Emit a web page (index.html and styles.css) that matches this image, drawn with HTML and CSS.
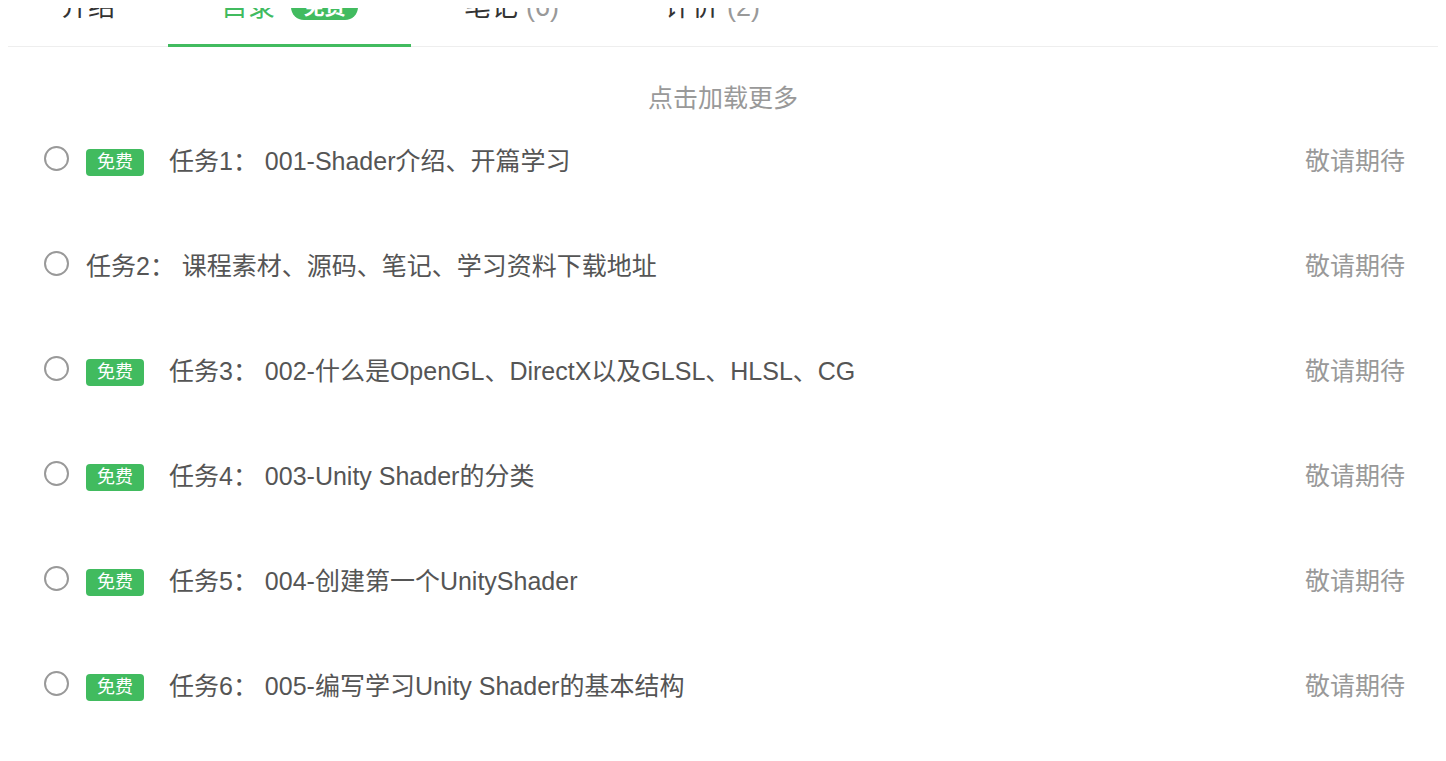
FILE: index.html
```html
<!DOCTYPE html>
<html lang="zh-CN">
<head>
<meta charset="utf-8">
<title>目录</title>
<link rel="stylesheet" href="styles.css">
</head>
<body>
<div class="page">
  <div class="tabs">
    <div class="tab">介绍</div>
    <div class="tab active">目录<span class="tab-badge">免费</span></div>
    <div class="tab">笔记<span class="count">(6)</span></div>
    <div class="tab">评价<span class="count">(2)</span></div>
  </div>
  <div class="load-more">点击加载更多</div>
  <ul class="list">
    <li class="row"><span class="radio"></span><span class="free">免费</span><span class="title">任务1：&nbsp;001-Shader介绍、开篇学习</span><span class="status">敬请期待</span></li>
    <li class="row"><span class="radio"></span><span class="title">任务2：&nbsp;课程素材、源码、笔记、学习资料下载地址</span><span class="status">敬请期待</span></li>
    <li class="row"><span class="radio"></span><span class="free">免费</span><span class="title">任务3：&nbsp;002-什么是OpenGL、DirectX以及GLSL、HLSL、CG</span><span class="status">敬请期待</span></li>
    <li class="row"><span class="radio"></span><span class="free">免费</span><span class="title">任务4：&nbsp;003-Unity Shader的分类</span><span class="status">敬请期待</span></li>
    <li class="row"><span class="radio"></span><span class="free">免费</span><span class="title">任务5：&nbsp;004-创建第一个UnityShader</span><span class="status">敬请期待</span></li>
    <li class="row"><span class="radio"></span><span class="free">免费</span><span class="title">任务6：&nbsp;005-编写学习Unity Shader的基本结构</span><span class="status">敬请期待</span></li>
  </ul>
</div>
</body>
</html>
```

FILE: styles.css
```css
html, body {
  background: #fff;
}
body {
  margin: 8px;
  font-family: "Liberation Sans", "Noto Sans CJK SC", sans-serif;
  overflow: hidden;
}
.page {
  width: 1430px;
}
.tabs {
  display: flex;
  margin-top: -38px;
  border-bottom: 1px solid #eeeeee;
}
.tab {
  box-sizing: border-box;
  height: 77px;
  margin-bottom: -1px;
  padding: 0 53px;
  line-height: 74px;
  font-size: 27px;
  color: #333;
  border-bottom: 3px solid transparent;
  display: flex;
  align-items: flex-start;
  white-space: nowrap;
}
.tab.active {
  color: #41bb5f;
  border-bottom-color: #41bb5f;
}
.tab .count {
  color: #999;
  margin-left: 8px;
}
.tab-badge {
  display: inline-block;
  margin-left: 16px;
  margin-top: 24px;
  width: 67px;
  height: 26px;
  line-height: 26px;
  text-align: center;
  border-radius: 13px;
  background: #41bb5f;
  color: #fff;
  font-size: 21px;
  font-weight: bold;
}
.load-more {
  margin-top: 34px;
  margin-bottom: 20px;
  text-align: center;
  line-height: 34px;
  font-size: 25px;
  color: #999;
}
.list {
  list-style: none;
  margin: 0;
  padding: 0 33px 0 36px;
}
.row {
  display: flex;
  align-items: center;
  height: 50px;
  margin-bottom: 55px;
  font-size: 25px;
  color: #555;
}
.radio {
  box-sizing: border-box;
  width: 25px;
  height: 25px;
  border: 2px solid #999;
  border-radius: 50%;
  margin-right: 17px;
  margin-bottom: 4px;
  flex: none;
}
.free {
  flex: none;
  width: 58px;
  height: 27px;
  line-height: 27px;
  border-radius: 4px;
  background: #41bb5f;
  color: #fff;
  font-size: 18px;
  text-align: center;
  margin-right: 25px;
  margin-top: 5px;
}
.title {
  white-space: nowrap;
  margin-bottom: 3px;
}
.status {
  margin-left: auto;
  color: #999;
  margin-bottom: 3px;
}
```
